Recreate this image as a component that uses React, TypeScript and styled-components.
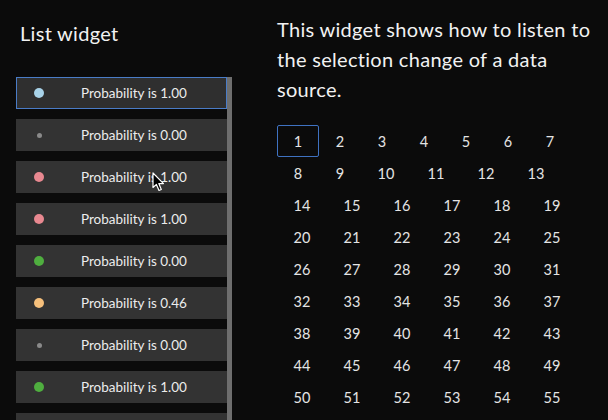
import React from "react";
import styled, { createGlobalStyle } from "styled-components";

const Global = createGlobalStyle`
  html, body { margin: 0; padding: 0; background: #0b0b0b; }
  body { font-family: Lato, "Open Sans", sans-serif; color: #f0f0f0; overflow: hidden; }
`;

const Page = styled.div`
  display: flex;
  width: 608px;
  height: 420px;
  overflow: hidden;
  background: #0b0b0b;
  position: relative;
`;

const LeftPane = styled.div`
  width: 277px;
  flex: none;
  display: flex;
  flex-direction: column;
  padding-left: 16px;
  box-sizing: border-box;
`;

const Title = styled.div`
  font-size: 20px;
  letter-spacing: 0.3px;
  line-height: 24px;
  margin: 21px 0 0 4px;
  color: #f2f2f2;
`;

const ListArea = styled.div`
  margin-top: 32px;
  display: flex;
  width: 216px;
`;

const List = styled.div`
  display: flex;
  flex-direction: column;
  gap: 10px;
  width: 211px;
`;

const ScrollThumb = styled.div`
  width: 5px;
  background: #6e6e6e;
  height: 400px;
`;

const Item = styled.div<{ $selected?: boolean }>`
  height: 32px;
  box-sizing: border-box;
  display: flex;
  align-items: center;
  background: ${(p) => (p.$selected ? "#2f2f2f" : "#333333")};
  border: 1px solid ${(p) => (p.$selected ? "#4a7cc7" : "transparent")};
`;

const DotSlot = styled.div`
  width: 44px;
  flex: none;
  display: flex;
  justify-content: center;
`;

const Dot = styled.span<{ $color: string; $size: number }>`
  display: block;
  width: ${(p) => p.$size}px;
  height: ${(p) => p.$size}px;
  border-radius: 50%;
  background: ${(p) => p.$color};
`;

const ItemText = styled.span`
  margin-left: 20px;
  font-size: 13.5px;
  color: #ececec;
  white-space: nowrap;
`;

const RightPane = styled.div`
  width: 320px;
  flex: none;
  display: flex;
  flex-direction: column;
`;

const Description = styled.p`
  margin: 14px 0 0 0;
  font-size: 20px;
  letter-spacing: 0.3px;
  line-height: 30px;
  color: #f2f2f2;
`;

const Grid = styled.div`
  margin-top: 21px;
  display: flex;
  flex-wrap: wrap;
`;

const Cell = styled.div<{ $wide: boolean; $selected?: boolean }>`
  width: ${(p) => (p.$wide ? 50 : 42)}px;
  height: 32px;
  box-sizing: border-box;
  display: flex;
  align-items: center;
  justify-content: center;
  font-size: 14.5px;
  color: #e4e4e4;
  border: 1px solid ${(p) => (p.$selected ? "#3f72c2" : "transparent")};
  border-radius: 2px;
`;

const Cursor = styled.svg`
  position: absolute;
  left: 152px;
  top: 172px;
  width: 13px;
  height: 20px;
`;

const items = [
  { color: "#a8d2e8", size: 10, value: "1.00", selected: true },
  { color: "#8a8a8a", size: 5, value: "0.00" },
  { color: "#e88890", size: 10, value: "1.00" },
  { color: "#e88890", size: 10, value: "1.00" },
  { color: "#4fae3f", size: 10, value: "0.00" },
  { color: "#f6c07c", size: 10, value: "0.46" },
  { color: "#8a8a8a", size: 5, value: "0.00" },
  { color: "#4fae3f", size: 10, value: "1.00" },
  { color: "#e88890", size: 10, value: "1.00" },
];

const numbers = Array.from({ length: 60 }, (_, i) => i + 1);

export default function App() {
  return (
    <Page>
      <Global />
      <LeftPane>
        <Title>List widget</Title>
        <ListArea>
          <List>
            {items.map((it, i) => (
              <Item key={i} $selected={it.selected}>
                <DotSlot>
                  <Dot $color={it.color} $size={it.size} />
                </DotSlot>
                <ItemText>Probability is {it.value}</ItemText>
              </Item>
            ))}
          </List>
          <ScrollThumb />
        </ListArea>
      </LeftPane>
      <RightPane>
        <Description>
          This widget shows how to listen to the selection change of a data source.
        </Description>
        <Grid>
          {numbers.map((n) => (
            <Cell key={n} $wide={n >= 10} $selected={n === 1}>
              {n}
            </Cell>
          ))}
        </Grid>
      </RightPane>
      <Cursor viewBox="0 0 13 20">
        <path
          d="M1 1 L1 15.5 L4.4 12.4 L7 18.5 L9.3 17.5 L6.8 11.6 L11.5 11.6 Z"
          fill="#000"
          stroke="#fff"
          strokeWidth="1.2"
          strokeLinejoin="round"
        />
      </Cursor>
    </Page>
  );
}
